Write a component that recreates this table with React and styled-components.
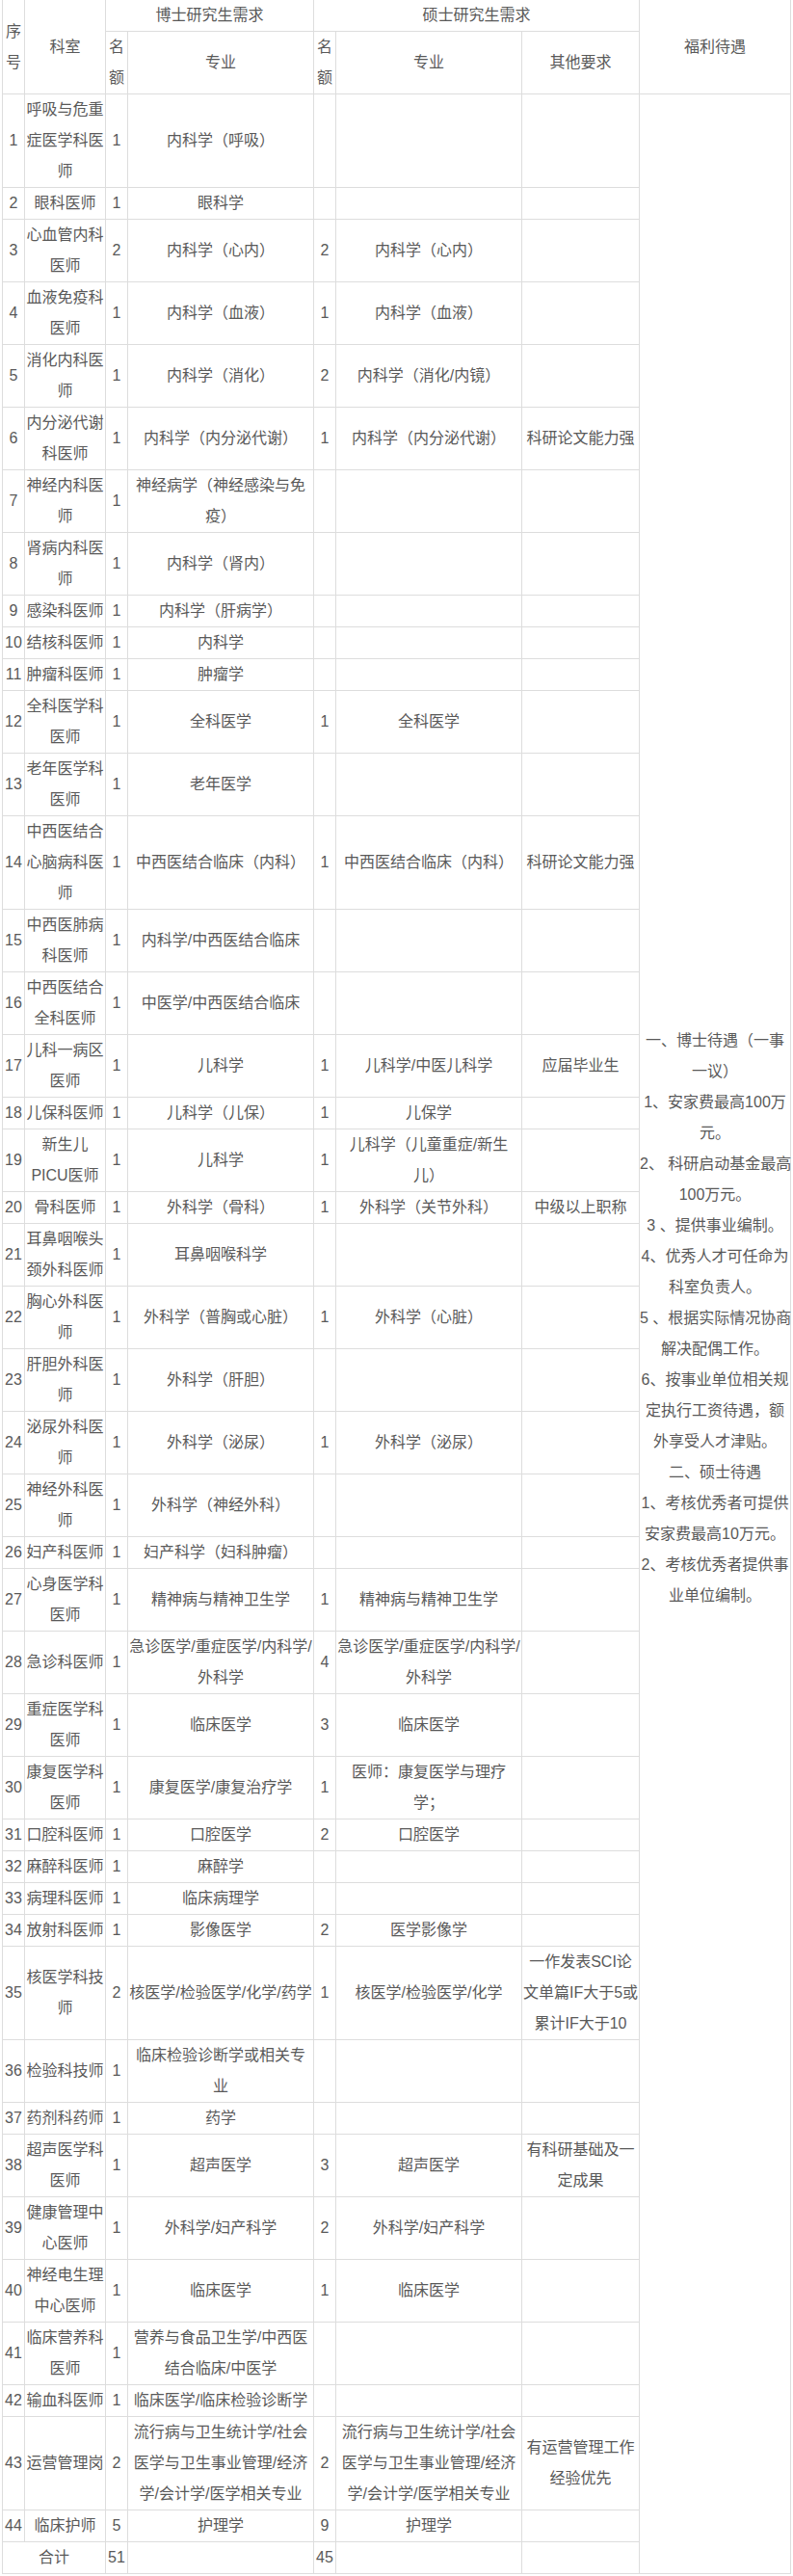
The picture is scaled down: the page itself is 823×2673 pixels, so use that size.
import React from 'react';
import styled, { createGlobalStyle } from 'styled-components';

const GlobalStyle = createGlobalStyle`
  html, body {
    margin: 0;
    padding: 0;
    background: #fff;
  }
  body {
    font-family: "Liberation Sans", "Noto Sans CJK SC", sans-serif;
  }
`;

const Wrap = styled.div`
  padding-left: 2px;
`;

const Table = styled.table`
  width: 818px;
  table-layout: fixed;
  border-collapse: collapse;
  border-spacing: 0;
  border: 1px solid #ddd;
  border-top: none;
  font-size: 16px;
  line-height: 32px;
  color: #595959;
`;

const HeadCell = styled.th`
  padding: 0;
  font-weight: normal;
  text-align: center;
  vertical-align: middle;
  white-space: pre;
  border: 1px solid #ddd;
  border-top: ${(p) => (p.$top ? 'none' : '1px solid #ddd')};
`;

const Cell = styled.td`
  padding: 0;
  text-align: center;
  vertical-align: middle;
  white-space: pre;
  border: 1px solid #ddd;
  ${(p) => p.$openTop && 'border-top-style: hidden;'}
`;

const colWidths = [23, 84, 23, 193, 23, 193, 122, 157];

const rows = [
  ['1', '呼吸与危重\n症医学科医\n师', '1', '内科学（呼吸）', '', '', ''],
  ['2', '眼科医师', '1', '眼科学', '', '', ''],
  ['3', '心血管内科\n医师', '2', '内科学（心内）', '2', '内科学（心内）', ''],
  ['4', '血液免疫科\n医师', '1', '内科学（血液）', '1', '内科学（血液）', ''],
  ['5', '消化内科医\n师', '1', '内科学（消化）', '2', '内科学（消化/内镜）', ''],
  ['6', '内分泌代谢\n科医师', '1', '内科学（内分泌代谢）', '1', '内科学（内分泌代谢）', '科研论文能力强'],
  ['7', '神经内科医\n师', '1', '神经病学（神经感染与免\n疫）', '', '', ''],
  ['8', '肾病内科医\n师', '1', '内科学（肾内）', '', '', ''],
  ['9', '感染科医师', '1', '内科学（肝病学）', '', '', ''],
  ['10', '结核科医师', '1', '内科学', '', '', ''],
  ['11', '肿瘤科医师', '1', '肿瘤学', '', '', ''],
  ['12', '全科医学科\n医师', '1', '全科医学', '1', '全科医学', ''],
  ['13', '老年医学科\n医师', '1', '老年医学', '', '', ''],
  ['14', '中西医结合\n心脑病科医\n师', '1', '中西医结合临床（内科）', '1', '中西医结合临床（内科）', '科研论文能力强'],
  ['15', '中西医肺病\n科医师', '1', '内科学/中西医结合临床', '', '', ''],
  ['16', '中西医结合\n全科医师', '1', '中医学/中西医结合临床', '', '', ''],
  ['17', '儿科一病区\n医师', '1', '儿科学', '1', '儿科学/中医儿科学', '应届毕业生'],
  ['18', '儿保科医师', '1', '儿科学（儿保）', '1', '儿保学', ''],
  ['19', '新生儿\nPICU医师', '1', '儿科学', '1', '儿科学（儿童重症/新生\n儿）', ''],
  ['20', '骨科医师', '1', '外科学（骨科）', '1', '外科学（关节外科）', '中级以上职称'],
  ['21', '耳鼻咽喉头\n颈外科医师', '1', '耳鼻咽喉科学', '', '', ''],
  ['22', '胸心外科医\n师', '1', '外科学（普胸或心脏）', '1', '外科学（心脏）', ''],
  ['23', '肝胆外科医\n师', '1', '外科学（肝胆）', '', '', ''],
  ['24', '泌尿外科医\n师', '1', '外科学（泌尿）', '1', '外科学（泌尿）', ''],
  ['25', '神经外科医\n师', '1', '外科学（神经外科）', '', '', ''],
  ['26', '妇产科医师', '1', '妇产科学（妇科肿瘤）', '', '', ''],
  ['27', '心身医学科\n医师', '1', '精神病与精神卫生学', '1', '精神病与精神卫生学', ''],
  ['28', '急诊科医师', '1', '急诊医学/重症医学/内科学/\n外科学', '4', '急诊医学/重症医学/内科学/\n外科学', ''],
  ['29', '重症医学科\n医师', '1', '临床医学', '3', '临床医学', ''],
  ['30', '康复医学科\n医师', '1', '康复医学/康复治疗学', '1', '医师：康复医学与理疗\n学；', ''],
  ['31', '口腔科医师', '1', '口腔医学', '2', '口腔医学', ''],
  ['32', '麻醉科医师', '1', '麻醉学', '', '', ''],
  ['33', '病理科医师', '1', '临床病理学', '', '', ''],
  ['34', '放射科医师', '1', '影像医学', '2', '医学影像学', ''],
  ['35', '核医学科技\n师', '2', '核医学/检验医学/化学/药学', '1', '核医学/检验医学/化学', '一作发表SCI论\n文单篇IF大于5或\n累计IF大于10'],
  ['36', '检验科技师', '1', '临床检验诊断学或相关专\n业', '', '', ''],
  ['37', '药剂科药师', '1', '药学', '', '', ''],
  ['38', '超声医学科\n医师', '1', '超声医学', '3', '超声医学', '有科研基础及一\n定成果'],
  ['39', '健康管理中\n心医师', '1', '外科学/妇产科学', '2', '外科学/妇产科学', ''],
  ['40', '神经电生理\n中心医师', '1', '临床医学', '1', '临床医学', ''],
  ['41', '临床营养科\n医师', '1', '营养与食品卫生学/中西医\n结合临床/中医学', '', '', ''],
  ['42', '输血科医师', '1', '临床医学/临床检验诊断学', '', '', ''],
  [
    '43',
    '运营管理岗',
    '2',
    '流行病与卫生统计学/社会\n医学与卫生事业管理/经济\n学/会计学/医学相关专业',
    '2',
    '流行病与卫生统计学/社会\n医学与卫生事业管理/经济\n学/会计学/医学相关专业',
    '有运营管理工作\n经验优先',
  ],
  ['44', '临床护师', '5', '护理学', '9', '护理学', ''],
];

const welfare = [
  '一、博士待遇（一事',
  '一议）',
  '1、安家费最高100万',
  '元。',
  '2、 科研启动基金最高',
  '100万元。',
  '3 、提供事业编制。',
  '4、优秀人才可任命为',
  '科室负责人。',
  '5 、根据实际情况协商',
  '解决配偶工作。',
  '6、按事业单位相关规',
  '定执行工资待遇，额',
  '外享受人才津贴。',
  '二、硕士待遇',
  '1、考核优秀者可提供',
  '安家费最高10万元。',
  '2、考核优秀者提供事',
  '业单位编制。',
].join('\n');

function App() {
  return (
    <>
      <GlobalStyle />
      <Wrap>
        <Table>
          <colgroup>
            {colWidths.map((w, i) => (
              <col key={i} style={{ width: w }} />
            ))}
          </colgroup>
          <thead>
            <tr>
              <HeadCell $top rowSpan={2}>{'序\n号'}</HeadCell>
              <HeadCell $top rowSpan={2}>科室</HeadCell>
              <HeadCell $top colSpan={2}>博士研究生需求</HeadCell>
              <HeadCell $top colSpan={3}>硕士研究生需求</HeadCell>
              <HeadCell $top rowSpan={2}>福利待遇</HeadCell>
            </tr>
            <tr>
              <HeadCell>{'名\n额'}</HeadCell>
              <HeadCell>专业</HeadCell>
              <HeadCell>{'名\n额'}</HeadCell>
              <HeadCell>专业</HeadCell>
              <HeadCell>其他要求</HeadCell>
            </tr>
          </thead>
          <tbody>
            {rows.map((r, i) => (
              <tr key={r[0]}>
                {r.map((text, j) => (
                  <Cell key={j}>{text}</Cell>
                ))}
                {i === 0 && <Cell rowSpan={rows.length}>{welfare}</Cell>}
              </tr>
            ))}
            <tr>
              <Cell colSpan={2}>合计</Cell>
              <Cell>51</Cell>
              <Cell />
              <Cell>45</Cell>
              <Cell />
              <Cell />
              <Cell $openTop />
            </tr>
          </tbody>
        </Table>
      </Wrap>
    </>
  );
}

export default App;
